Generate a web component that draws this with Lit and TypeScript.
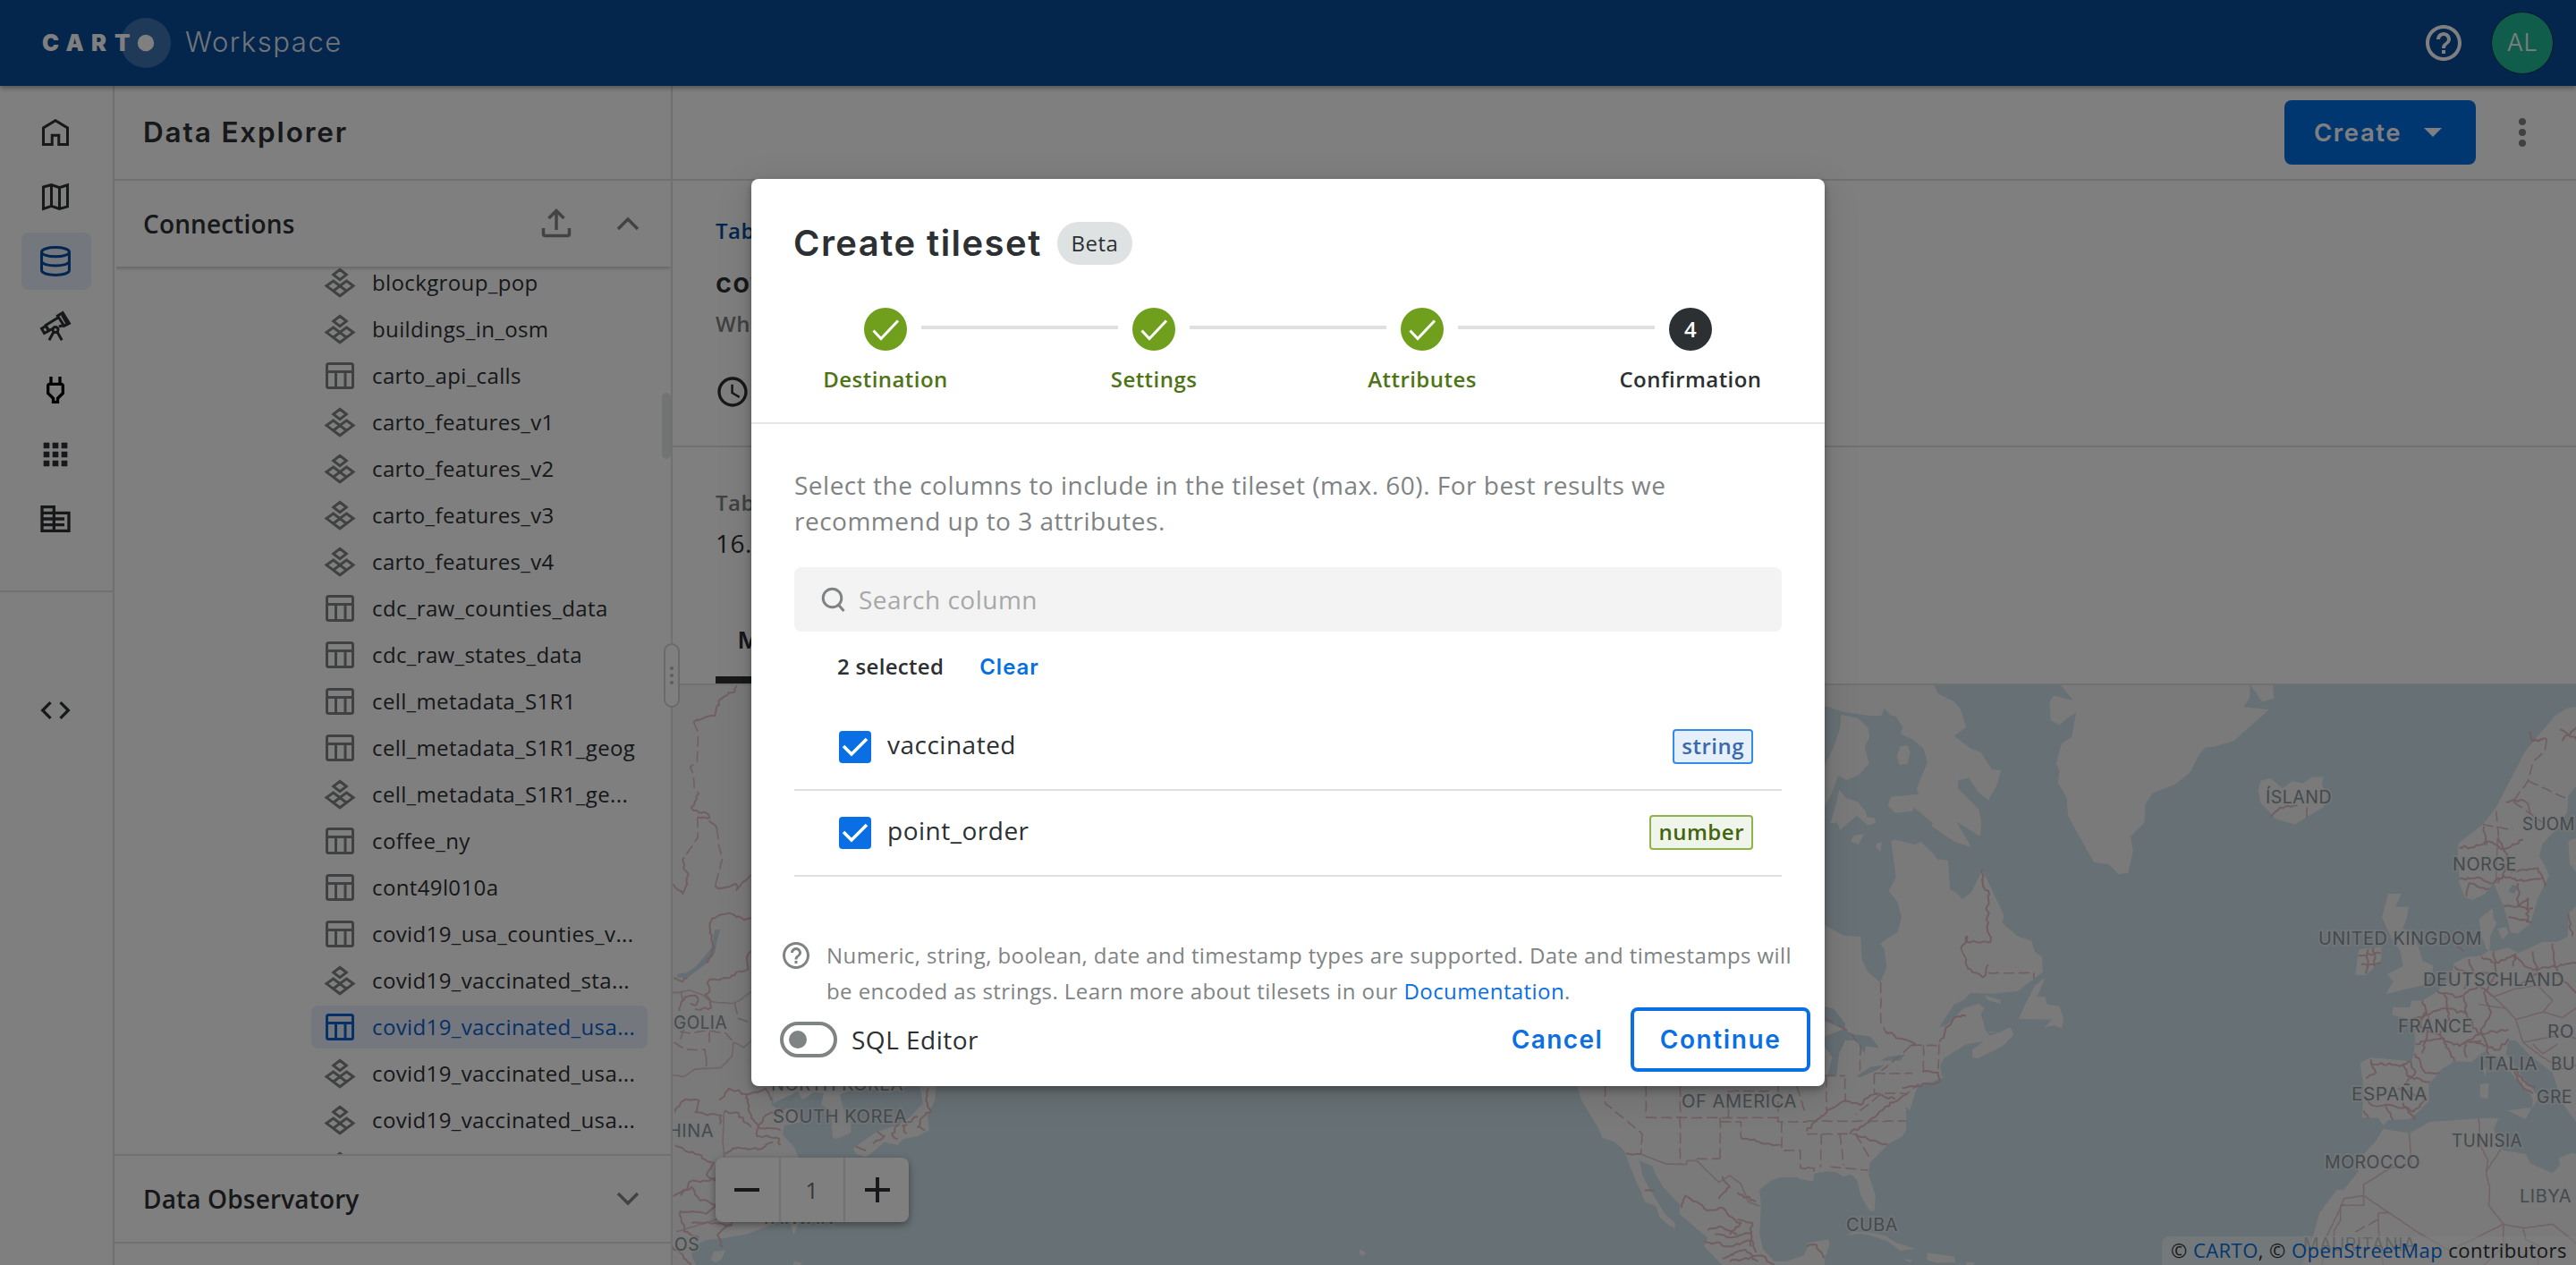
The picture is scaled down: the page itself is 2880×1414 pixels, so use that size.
import { LitElement, html, svg, css } from "lit";
import { customElement } from "lit/decorators.js";

type Pt = [number, number];

const pts = (s: string): Pt[] => s.trim().split(/\s+/).map((p) => p.split(",").map(Number) as Pt);

/* Deterministic roughening, so administrative borders look surveyed rather than ruled. */
const jag = (s: string, sx: number, sy: number, amp = 1.6): string => {
  const p = pts(s);
  let seed = Math.round(Math.abs(p[0][0] * 13 + p[0][1] * 7)) + 11;
  const rnd = () => {
    seed = (seed * 16807) % 2147483647;
    return seed / 2147483647 - 0.5;
  };
  let d = `M${p[0][0]} ${p[0][1]}`;
  for (let i = 1; i < p.length; i++) {
    const [x0, y0] = p[i - 1];
    const [x1, y1] = p[i];
    const n = Math.max(1, Math.round(Math.hypot((x1 - x0) / sx, (y1 - y0) / sy) / 3.5));
    for (let k = 1; k <= n; k++) {
      const t = k / n;
      const j = k === n ? 0 : amp;
      d += `L${(x0 + (x1 - x0) * t + rnd() * 2 * j * sx).toFixed(1)} ${(y0 + (y1 - y0) * t + rnd() * 2 * j * sy).toFixed(1)}`;
    }
  }
  return d;
};

interface Sheet {
  x: number; y: number; sx: number; sy: number;
  land: string[]; water: string[]; rough: string[]; dashed: string[]; plain: string[];
}

/* The basemap is stored as sheets, each with its own local grid. */
const SHEETS: Sheet[] = [
  {
    x: -12, y: -16, sx: 3, sy: 3,
    land: ["36,44 310,44 310,1440 36,1440"],
    water: [
      "178,868 195,868 185,905 178,945 150,980 85,1030 50,1028 55,1015 85,1012 115,990 145,955 165,930",
      "375,1440 400,1415 440,1392 470,1400 440,1440", "480,1440 500,1420 545,1415 540,1440", "590,1415 870,1390 870,1440 595,1440",
    ],
    rough: [
      "252,50 245,70 210,85 190,100 180,140 178,150 145,155 107,170",
      "98,455 105,468 155,480 160,492 120,490", "90,680 85,715 70,747 38,715", "125,410 98,455", "75,625 72,660 90,680",
      "160,500 185,530", "180,715 190,730 250,715 250,735 298,685",
      "165,840 190,820 235,815 270,830 300,830", "165,840 165,900 175,930 150,980",
      "40,1030 70,1042 85,1030", "155,1040 215,1030 290,1000 285,960 300,940", "155,1040 160,1075 145,1085 165,1110",
      "60,1140 65,1110 90,1090 120,1095 115,1120 95,1115", "110,1135 165,1130 160,1110",
      "300,1350 260,1400 210,1440", "290,1375 320,1440", "40,1430 60,1440",
    ],
    dashed: [
      "107,170 122,210 118,305 95,322 105,345 110,400 125,410", "120,490 120,560 75,625", "185,530 190,580 203,630 180,715",
      "245,1115 255,1165 300,1180", "60,1210 100,1215 150,1205 215,1215 240,1245", "40,1245 80,1270 145,1270 150,1335", "160,1210 158,1260", "75,1200 60,1240", "65,1075 70,1110",
    ],
    plain: [
      "36,1078 60,1078 90,1070 135,1085 165,1110 240,1115 260,1105 300,1075", "240,1245 275,1262 300,1240",
      "240,1245 235,1300 200,1325 150,1335 120,1340 75,1360 36,1350",
    ],
  },
  {
    x: -12, y: 414, sx: 1.206, sy: 3,
    land: [
      "14,0 121,0 121,102 150,102 148,165 155,178 178,178 187,222 165,235 163,265 178,305 185,345 172,460 155,560 135,580 115,598 85,612 60,618 42,640 40,670 46,702 14,702",
      "150,102 330,102 320,118 260,112 240,130 245,180 255,215 255,258 235,280 230,272 228,185 215,165 218,125 205,122 190,148 183,120 150,160",
      "348,102 370,102 368,150 358,200 360,250 345,270 325,280 318,300 300,290 285,322 275,340 262,330 258,312 275,280 290,255 320,230 335,205 352,160",
      "172,556 186,556 178,600", "70,657 86,652 80,685 72,694 66,685", "178,690 190,695 186,702 177,702",
      "941,648 950,662 944,672 941,665",
      "1234,102 1240,150 1252,200 1262,240 1268,275 1285,290 1298,320 1305,370 1315,430 1320,455 1325,490 1340,505 1345,540 1355,565 1366,578 1366,560 1352,530 1345,500 1330,440 1322,400 1318,352 1335,370 1340,400 1350,440 1365,480 1373,500 1372,530 1400,590 1410,610 1405,640 1425,690 1430,702 1568,702 1568,625 1545,635 1540,670 1515,690 1500,690 1485,650 1480,600 1482,500 1480,450 1495,420 1510,407 1530,407 1535,415 1550,420 1553,395 1568,390 1568,102",
    ],
    water: [],
    rough: [
      "18,190 30,150 50,150 45,190 80,200 78,230", "78,150 90,110 115,130 140,110 148,150", "115,130 118,190 130,240 128,270 155,275 160,300",
      "18,300 45,330 70,360 60,400 72,420", "84,190 100,190 120,240", "130,240 140,200 165,180", "130,240 160,250", "85,330 100,310 130,315 150,290",
      "25,470 40,420 60,420 72,410", "15,470 40,440 50,480 72,500", "25,520 60,530 72,500", "25,520 30,590 50,610", "40,560 70,560 95,570",
      "82,640 75,600 95,560", "14,640 40,700",
      "360,110 356,150 362,190 350,210 345,240 355,250", "345,205 325,235 330,262", "320,230 310,262 318,280", "290,255 300,270 285,295", "262,305 275,318",
      "1300,330 1320,330", "1455,275 1480,290 1508,300", "1568,230 1555,260", "1535,375 1550,385", "1325,452 1338,452",
      "1375,510 1380,470 1395,490 1410,520 1430,510 1440,540", "1420,600 1440,610 1470,590", "1405,620 1440,640 1470,620 1475,660", "1430,680 1460,650 1478,690", "1440,540 1455,560 1440,600", "1450,460 1475,490", "1550,650 1568,640", "1430,405 1440,440 1425,480",
      "1450,550 1470,560 1468,640", "1410,585 1430,575 1450,600", "1440,690 1480,670 1500,700",
    ],
    dashed: [
      "1272,102 1272,160 1322,262", "1327,102 1327,208", "1373,102 1373,208", "1427,208 1427,345", "1373,208 1373,362", "1327,208 1505,208", "1438,119 1495,119", "1438,119 1438,208", "1427,222 1455,222 1455,275",
      "1505,102 1505,222 1568,222", "1530,102 1540,180 1552,222", "1545,264 1568,264", "1510,222 1510,318 1535,318 1535,375", "1395,346 1427,346", "1322,262 1320,330", "60,0 60,50",
    ],
    plain: ["14,65 30,70 45,45 80,40 95,0", "1320,330 1355,364 1382,364 1382,352 1395,352 1415,400 1425,425 1440,402 1455,430 1465,490 1480,505", "84,190 82,290 84,340", "20,590 60,560 85,540"],
  },
  {
    x: 1268, y: -16, sx: 1.823, sy: 2.361,
    land: [
      "36,38 260,38 268,60 300,80 313,100 325,148 300,172 335,205 355,214 377,260 396,262 388,300 370,342 350,320 330,282 309,288 308,310 350,365 356,400 354,437 305,398 320,430 335,465 300,450 255,410 256,400 218,360 215,370 180,375 165,355 172,332 228,325 224,310 246,240 238,205 215,180 190,165 196,150 182,120 170,116 158,98 152,118 127,118 75,108 36,92",
      "70,115 105,125 125,150 128,175 118,200 127,245 105,275 80,288 64,275 52,320 36,360 36,250 55,200 68,150",
      "66,313 80,335 103,345 120,370 122,385 138,388 141,400 125,408 102,382 85,400 68,420 62,400 48,402 60,350",
      "190,200 205,196 211,215 205,245 188,248 184,225", "95,435 117,430 105,458 90,450", "143,455 153,450 150,477 141,465",
      "0,660 36,670 75,698 110,702 112,760 125,795 150,822 163,780 158,735 150,720 165,705 185,690 193,650 185,610 167,580 182,545 172,450 180,445 220,458 232,450 260,485 265,497 288,500 292,577 303,583 317,602 335,585 358,525 402,645 398,665 430,700 458,712 465,742 480,755 481,795 460,815 430,845 380,852 333,850 320,868 300,880 270,940 285,935 320,890 350,878 362,890 355,905 365,950 390,955 415,940 422,960 400,990 350,1022 338,1022 337,1000 360,978 325,985 280,1022 272,1040 275,1070 283,1070 255,1085 228,1092 222,1110 210,1160 202,1150 203,1190 202,1215 195,1228 165,1250 135,1290 128,1300 126,1330 140,1385 138,1425 128,1425 110,1385 103,1345 90,1328 75,1335 60,1322 15,1320 14,1345 0,1345",
      "0,1510 45,1500 46,1515 40,1540 20,1568 0,1568",
      "485,810 470,860 485,860 490,880 515,885 523,915 520,943 505,935 485,940 500,920 432,918 445,880 465,830", "363,856 395,868 395,878 368,868",
      "518,38 903,38 903,70 890,95 942,102 870,185 830,200 812,202 800,220 780,270 750,300 705,322 690,352 688,400 660,437 665,475 655,533 635,536 615,510 585,505 570,470 540,400 532,380 530,335 512,295 515,262 508,245 520,190 540,175 549,110 530,125 515,143 497,130 495,80 503,65 543,78",
      "905,38 950,38 952,72 928,82",
      "920,315 925,290 945,283 970,310 990,290 1010,297 1030,280 1053,280 1050,300 1060,330 1052,360 995,405 955,390 945,375 925,348",
      "1568,95 1550,98 1525,118 1465,210 1405,360 1378,405 1328,455 1327,480 1330,560 1340,595 1355,605 1380,590 1400,560 1420,620 1435,690 1450,693 1475,665 1490,600 1513,540 1505,515 1493,490 1500,455 1530,415 1550,370 1552,330 1568,305",
      "1568,440 1552,450 1555,510 1568,530",
      "1568,620 1553,640 1551,700 1530,715 1500,715 1450,745 1430,730 1400,740 1385,735 1375,700 1370,655 1398,625 1400,655 1406,665 1393,700 1392,735 1375,752 1345,755 1320,770 1312,810 1285,845 1255,870 1232,870 1230,888 1195,888 1193,908 1235,920 1240,960 1238,1010 1232,1030 1150,1020 1128,1035 1135,1100 1132,1178 1165,1180 1175,1200 1185,1185 1228,1183 1245,1165 1268,1135 1268,1090 1295,1050 1320,1030 1355,1032 1380,1005 1410,1020 1430,1050 1450,1085 1472,1110 1480,1130 1478,1155 1492,1125 1480,1105 1455,1065 1425,1010 1430,975 1445,975 1475,1015 1520,1060 1530,1100 1545,1150 1568,1190",
      "1408,680 1425,675 1430,690 1418,710", "1428,1160 1478,1152 1465,1183", "1372,1090 1390,1088 1388,1130 1372,1125", "1378,1045 1386,1050 1382,1072",
      "1185,588 1212,588 1200,622 1227,622 1222,655 1215,680 1240,700 1255,765 1277,778 1275,800 1255,830 1220,840 1180,853 1195,820 1183,800 1215,780 1210,740 1190,700 1172,650", "1125,735 1172,728 1170,765 1140,803 1118,802",
      "1175,1208 1228,1220 1270,1190 1380,1180 1410,1180 1400,1210 1418,1265 1465,1275 1475,1300 1520,1325 1535,1305 1533,1285 1558,1272 1568,1275 1568,1568 1010,1568 1030,1500 1045,1430 1080,1370 1095,1368 1125,1320 1118,1300 1160,1240",
      "80,1490 95,1480 130,1482 160,1490 180,1508 222,1525 190,1530 165,1505 130,1490 110,1485", "245,1535 300,1545 303,1560 265,1562 245,1555", "325,1560 343,1562 340,1568 325,1568", "195,1552 215,1555 212,1562",
    ],
    water: [
      "36,885 55,892 78,930 78,945 36,925", "36,965 75,945 92,958 130,965 148,995 120,990 118,1010 100,975 78,975 66,1010 60,1070 42,1070 52,1020 36,990",
      "100,1070 130,1045 158,1040 145,1052 110,1072", "150,1028 165,1018 200,1012 190,1028", "360,935 372,955 392,955 372,962",
      "1438,565 1450,568 1442,588 1430,582",
    ],
    rough: [
      "358,525 360,570 370,580 368,670 375,715 325,715 327,700 315,735", "325,760 328,785 360,808 370,775", "160,950 190,970 222,985", "325,910 300,915 270,980",
      "0,1215 20,1185 50,1155 75,1135 110,1145 130,1120 145,1118", "88,1222 120,1195 160,1150 205,1115", "100,1222 130,1240 165,1250", "150,1118 180,1130", "195,1100 270,1085 268,1060 235,1058",
      "945,385 965,360 1000,355", "1330,465 1360,465 1390,450 1420,470 1460,445", "1425,345 1455,340 1470,350",
      "1330,550 1365,545 1400,560 1420,540 1460,555 1500,545", "1345,595 1350,560 1390,575", "1420,620 1480,625", "1430,650 1478,665", "1450,560 1450,620 1470,600 1468,665", "1435,530 1490,520 1505,570", "1410,440 1430,500 1410,560", "1380,410 1385,460",
      "1125,750 1170,745", "1145,735 1140,800", "1155,730 1158,780", "1130,775 1170,770",
      "1375,755 1410,770 1440,750 1480,790 1568,770", "1400,740 1405,800 1380,850 1395,900 1370,960", "1285,845 1330,860 1370,830 1400,860", "1300,850 1310,920 1290,960 1320,1030", "1235,920 1300,890 1345,905 1370,960 1330,990 1290,970 1240,985", "1340,860 1345,905", "1255,870 1270,930 1255,1010", "1360,980 1410,1000 1430,970", "1375,955 1390,1010", "1370,960 1430,945", "1345,1020 1340,980 1375,975", "1260,900 1250,940 1290,960",
      "1440,780 1445,745", "1480,740 1490,800 1450,830", "1520,720 1530,800 1568,850", "1320,780 1350,800 1340,840", "1350,760 1360,800 1400,800",
      "1150,1025 1160,1060 1140,1075", "1150,1035 1215,1040 1230,1030", "1215,1035 1225,1070 1270,1085", "1232,1030 1240,1060 1220,1090", "1240,1010 1260,1060 1290,1060", "1135,1120 1150,1145 1200,1150 1240,1160", "1215,1140 1240,1185", "1180,1145 1195,1185", "1205,1100 1260,1130 1235,1165", "1135,1160 1145,1180",
      "1445,1050 1465,1085 1485,1100", "1435,1040 1460,1100 1480,1115", "1553,640 1560,700", "1475,160 1478,185 1508,180", "1535,155 1568,180", "1540,185 1568,150", "0,1520 20,1515 35,1550",
    ],
    dashed: [
      "151,822 151,930 160,950", "315,735 325,760", "370,797 463,797 463,812", "36,915 85,950 110,990 108,1060", "40,1070 40,1160", "78,1075 78,1135", "36,1068 78,1068",
      "138,1062 215,1062", "138,1062 138,1115 205,1115 228,1090", "150,1118 100,1170", "0,1188 203,1188", "0,1222 100,1222", "30,1222 28,1310", "68,1222 75,1305", "100,1222 130,1290", "48,1308 125,1318", "0,1310 15,1312 15,1325",
      "238,988 238,1060", "270,985 268,1050", "213,988 270,988", "213,988 195,1010 152,1055", "222,985 213,988",
      "1478,185 1508,180 1505,210 1480,240 1470,290 1440,345", "1470,290 1550,338", "1405,370 1410,440", "1440,345 1500,400", "1378,405 1440,420", "1470,350 1480,400", "1300,700 1340,740",
      "1118,1480 1165,1448", "1020,360 1018,395",
    ],
    plain: [
      "1228,1220 1232,1300 1190,1312 1135,1355 1135,1385 1250,1485 1310,1530 1420,1460 1460,1470 1520,1460 1568,1510", "1135,1385 1095,1392 1085,1425 1060,1490 1050,1568", "1135,1385 1135,1410 1088,1410 1088,1450 1075,1475 1072,1540", "1165,1430 1165,1470 1175,1568", "1165,1430 1188,1430",
      "1370,1180 1372,1250 1388,1290 1385,1330 1392,1360 1390,1410 1420,1460", "1415,1262 1385,1320", "1460,1470 1465,1500 1495,1520 1490,1568", "1380,1568 1420,1520 1420,1460",
      "1400,860 1440,840 1490,830 1520,870 1500,900 1445,920 1425,890 1400,860", "1500,900 1540,915 1568,890", "1445,920 1460,980 1540,960 1568,970", "1460,980 1500,1020 1540,1050 1568,1040", "1480,985 1500,1010 1530,985", "1425,890 1370,880",
      "1405,560 1408,440",
    ],
  },
];

type Label = [string, number, number, number];
const LABELS: Label[] = [
  ["ÍSLAND", 2533, 898, 74], ["SUOM", 2820, 928, 59], ["NORGE", 2742, 973, 72], ["UNITED KINGDOM", 2592, 1056, 183],
  ["DEUTSCHLAND", 2709, 1102, 158], ["FRANCE", 2681, 1154, 84], ["RO", 2848, 1160, 30], ["ITALIA", 2772, 1196, 65], ["BU", 2852, 1196, 27],
  ["ESPAÑA", 2629, 1230, 85], ["GRE", 2836, 1233, 40], ["TUNISIA", 2741, 1282, 79], ["MOROCCO", 2599, 1306, 107], ["LIBYA", 2817, 1344, 58],
  ["CUBA", 2064, 1376, 58], ["MAURITANIA", 2575, 1398, 126], ["GOLIA", 753, 1150, 60],
  ["NORTH KOREA", 862, 1219, 148], ["SOUTH KOREA", 864, 1255, 150], ["HINA", 747, 1271, 51], ["OS", 754, 1398, 28],
  ["OF AMERICA", 1880, 1238, 129], ["TAIWAN", 850, 1368, 83],
];

const polys = (list: string[], cls: string) => list.map((p) => svg`<polygon class=${cls} points=${p}></polygon>`);

@customElement("world-map")
class WorldMap extends LitElement {
  static styles = css`
    :host { display: block; width: 2128px; height: 648px; }
    svg { display: block; background: #cee0e9; }
    .land { fill: #f4f4f4; }
    .water { fill: #cadce6; }
    path { fill: none; stroke: #e0bcc2; stroke-width: 2; vector-effect: non-scaling-stroke; stroke-linejoin: round; }
    .dash { stroke-width: 1.6; stroke-dasharray: 12 5; }
    .plain { stroke: #e2c8cd; stroke-width: 1.6; }
    text { font: 400 19.5px Inter, "Open Sans", sans-serif; fill: #8a959b; stroke: #f0f2f3; stroke-opacity: .55; stroke-width: 4px; paint-order: stroke; }
  `;
  render() {
    return html`<svg width="2128" height="648" viewBox="0 0 2128 648">
      ${SHEETS.map((s) => svg`<g transform="translate(${s.x} ${s.y}) scale(${1 / s.sx} ${1 / s.sy})">
        ${polys(s.land, "land")}${polys(s.water, "water")}
        ${s.plain.map((l) => svg`<path class="plain" d=${jag(l, s.sx, s.sy, 0.3)}></path>`)}
        ${s.dashed.map((l) => svg`<path class="dash" d=${jag(l, s.sx, s.sy, 0.3)}></path>`)}
        ${s.rough.map((l) => svg`<path d=${jag(l, s.sx, s.sy)}></path>`)}
      </g>`)}
      ${LABELS.map(([t, x, y, w]) => svg`<text x=${x - 752} y=${y - 766} textLength=${w} lengthAdjust="spacingAndGlyphs">${t}</text>`)}
    </svg>`;
  }
}

const help = (size: number) => html`<svg width=${size} height=${size} viewBox="0 0 24 24" fill="currentColor"><path d="M11 18h2v-2h-2v2zm1-16C6.48 2 2 6.48 2 12s4.48 10 10 10 10-4.48 10-10S17.52 2 12 2zm0 18c-4.41 0-8-3.59-8-8s3.59-8 8-8 8 3.59 8 8-3.59 8-8 8zm0-14c-2.21 0-4 1.79-4 4h2c0-1.1.9-2 2-2s2 .9 2 2c0 2-3 1.75-3 5h2c0-2.25 3-2.5 3-5 0-2.21-1.79-4-4-4z"/></svg>`;

const VB = "-1.33 -1.33 26.67 26.67";
const NAV = [
  html`<svg class="ico line" viewBox=${VB}><path d="M3 21V8.6L12 3.2l9 5.4V21h-6.5v-6.8h-5V21z"/></svg>`,
  html`<svg class="ico line" viewBox=${VB}><path d="M3 4.7 9 3.1l6 2 6-1.900v16.100l-6 1.600-6-2-6 2zM9 3.100v15.800M15 5.100v15.800"/></svg>`,
  html`<svg class="ico line" viewBox=${VB}><path d="M1.7 5.1c0-2 4.6-3.4 10.3-3.4s10.3 1.4 10.3 3.4S17.700 8.500 12 8.500 1.700 7.100 1.700 5.100zM1.700 5.100v13.800c0 2 4.600 3.400 10.300 3.400s10.300-1.400 10.300-3.400V5.100M1.700 12c0 2 4.600 3.400 10.300 3.400s10.300-1.400 10.300-3.400"/></svg>`,
  html`<svg class="ico line" viewBox=${VB}><path d="M13.600 4.700 17.400 2.400 22.300 10.300 18.500 12.200zM14 6 4.800 11.700 7 15.600M7 15.600l3-1.200M14.600 12.700l3.400-1M1.700 14.200l3.200-1.900 2 3.600-3.200 1.800zM17 4l3.800 6.800M10.700 16.700 7.300 22.800M13.300 16.700l3.500 6.100"/><circle cx="12" cy="15" r="2"/></svg>`,
  html`<svg class="ico black" viewBox="0 0 24 24"><path d="M16 9v4.660l-3.500 3.510V19h-1v-1.830L8 13.650V9h8m0-6h-2v4h-4V3H8v4h-.01C6.900 6.990 6 7.890 6 8.980v5.520L9.500 18v3h5v-3l3.500-3.510V9c0-1.100-.9-2-2-2V3z"/></svg>`,
  html`<svg class="ico" viewBox="0 0 24 24"><path d="M4 8h4V4H4v4zm6 12h4v-4h-4v4zm-6 0h4v-4H4v4zm0-6h4v-4H4v4zm6 0h4v-4h-4v4zm6-10v4h4V4h-4zm-6 4h4V4h-4v4zm6 6h4v-4h-4v4zm0 6h4v-4h-4v4z"/></svg>`,
  html`<svg class="ico" viewBox="0 0 24 24"><path d="M12 7V3H2v18h20V7H12zM10 19H4v-2h6v2zm0-4H4v-2h6v2zm0-4H4V9h6v2zm0-4H4V5h6v2zm10 12h-8v-2h2v-2h-2v-2h2v-2h-2V9h8v10zm-2-8h-4v2h4v-2zm0 4h-4v2h4v-2z"/></svg>`,
];

const tableIcon = html`<svg class="fico" viewBox="0 0 40 40"><rect x="5.500" y="6.500" width="29" height="27" rx="2"/><path d="M5.500 15.500h29M15.500 15.500v18M26 15.500v18"/></svg>`;
const tilesIcon = html`<svg class="fico" viewBox="0 0 40 40"><path d="M20 5.300 27.300 11 20 16.700 12.700 11zM12.600 18 20 23.600 12.600 29.200 5 23.600zM27.400 18 35 23.600 27.400 29.200 20 23.600zM20 23.600 27.400 29.200 20 34.800 12.600 29.200z"/></svg>`;

const FILES: [string, "table" | "tiles"][] = [
  ["blockgroup_pop", "tiles"], ["buildings_in_osm", "tiles"], ["carto_api_calls", "table"], ["carto_features_v1", "tiles"],
  ["carto_features_v2", "tiles"], ["carto_features_v3", "tiles"], ["carto_features_v4", "tiles"], ["cdc_raw_counties_data", "table"],
  ["cdc_raw_states_data", "table"], ["cell_metadata_S1R1", "table"], ["cell_metadata_S1R1_geog", "table"], ["cell_metadata_S1R1_ge...", "tiles"],
  ["coffee_ny", "table"], ["cont49l010a", "table"], ["covid19_usa_counties_v...", "table"], ["covid19_vaccinated_sta...", "tiles"],
  ["covid19_vaccinated_usa...", "table"], ["covid19_vaccinated_usa...", "tiles"], ["covid19_vaccinated_usa...", "tiles"], ["", "tiles"],
];
const SELECTED = 16;

const STEPS = ["Destination", "Settings", "Attributes", "Confirmation"];
const COLUMNS = [["vaccinated", "string"], ["point_order", "number"]];

@customElement("tileset-dialog")
class TilesetDialog extends LitElement {
  static styles = css`
    :host { display: block; width: 1200px; height: 1014px; background: #fff; border-radius: 8px; box-shadow: 0 4px 8px rgba(0,0,0,.3), 0 8px 40px rgba(0,0,0,.14); color: #2c3032; font: 400 28px/40px "Open Sans", sans-serif; letter-spacing: .5px; overflow: hidden; }
    * { box-sizing: border-box; }
    .top { height: 274px; padding-top: 48px; border-bottom: 2px solid #e5e5e5; }
    .title { display: flex; align-items: center; gap: 16px; padding-left: 47px; height: 48px; }
    h2 { margin: 0; width: 279px; white-space: nowrap; font: 600 40px/48px Inter, sans-serif; letter-spacing: 1.450px; }
    .beta { height: 48px; width: 84px; border-radius: 24px; background: #dfe2e3; font-size: 24px; line-height: 48px; text-align: center; }
    .steps { display: flex; margin-top: 48px; }
    .step { width: 300px; text-align: center; color: #4f7416; font-weight: 600; font-size: 24px; line-height: 36px; letter-spacing: .45px; }
    .mark { display: flex; gap: 16px; height: 48px; }
    .bar { flex: 1; height: 4px; margin-top: 20px; background: #e0e0e0; }
    .bar.off { background: none; }
    .dot { width: 48px; height: 48px; border-radius: 50%; background: #709f1d; color: #fff; display: flex; align-items: center; justify-content: center; }
    .dot svg { display: block; }
    .lab { margin-top: 14px; }
    .now { color: #2c3032; }
    .now .dot { background: #2c3032; }
    .body { padding: 48px 48px 0; }
    .intro { color: #808384; letter-spacing: .5px; white-space: nowrap; }
    .search { margin-top: 32px; height: 72px; border-radius: 8px; background: #f3f3f3; display: flex; align-items: center; padding-left: 26px; gap: 10px; color: #a6a8a9; letter-spacing: .5px; }
    .search svg { display: block; }
    .picked { height: 82px; padding: 0 0 4px 48px; display: flex; align-items: center; gap: 40px; font-size: 24px; font-weight: 600; letter-spacing: .3px; }
    .clear { font: 600 24px/40px Inter, sans-serif; color: #036fe2; padding-top: 2px; letter-spacing: 1px; }
    .col { height: 96px; border-bottom: 2px solid #e0e0e0; display: flex; align-items: center; padding: 0 32px 0 50px; }
    .box { width: 36px; height: 36px; border-radius: 4px; background: #0a6fe5; }
    .box svg { display: block; }
    .name { flex: 1; padding: 0 0 6px 18px; }
    .tag { height: 39px; line-height: 34px; margin-bottom: 1px; padding: 0 8px; border: 2px solid; border-radius: 4px; font-size: 24px; font-weight: 600; letter-spacing: .5px; }
    .string { border-color: #338be7; background: #e6f0fb; color: #3b69ab; }
    .number { border-color: #8fb24a; background: #eff5ea; color: #42640f; }
    .note { margin-top: 68px; padding-left: 32px; display: flex; gap: 16px; color: #808384; font-size: 24px; letter-spacing: .42px; white-space: nowrap; }
    .note svg { display: block; margin-top: 2px; }
    .note a { color: #0a6fe5; }
    .foot { margin-top: -2px; height: 72px; padding: 0 16px 0 32px; display: flex; align-items: center; }
    .switch { width: 64px; height: 40px; border: 4px solid #808384; border-radius: 20px; padding: 6px; }
    .knob { width: 20px; height: 20px; border-radius: 50%; background: #808384; }
    .sql { flex: 1; padding-left: 16px; }
    .btn { font: 600 28px/64px Inter, sans-serif; color: #0a6fe5; letter-spacing: 1.400px; text-align: center; }
    .cancel { width: 130px; margin-right: 17px; }
    .go { width: 201px; height: 72px; border: 4px solid #0a6fe5; border-radius: 8px; letter-spacing: 1.600px; }
  `;
  render() {
    return html`
      <div class="top">
        <div class="title"><h2>Create tileset</h2><span class="beta">Beta</span></div>
        <div class="steps">${STEPS.map((s, i) => html`
          <div class="step ${i === 3 ? "now" : ""}">
            <div class="mark">
              <span class="bar ${i === 0 ? "off" : ""}"></span>
              <span class="dot">${i === 3 ? "4" : html`<svg width="32" height="32" viewBox="0 0 32 32" fill="none" stroke="#fff" stroke-width="3"><path d="M2.500 17.500 11 26.500 30 6.500"/></svg>`}</span>
              <span class="bar ${i === 3 ? "off" : ""}"></span>
            </div>
            <div class="lab">${s}</div>
          </div>`)}</div>
      </div>
      <div class="body">
        <div class="intro">Select the columns to include in the tileset (max. 60). For best results we<br>recommend up to 3 attributes.</div>
        <div class="search"><svg width="36" height="36" viewBox="0 0 36 36" fill="none" stroke="#808384" stroke-width="3"><circle cx="16.500" cy="16.500" r="10.300"/><path d="m22.500 23 7 8"/></svg><span>Search column</span></div>
        <div class="picked"><span>2 selected</span><span class="clear">Clear</span></div>
        ${COLUMNS.map(([n, t]) => html`<div class="col"><span class="box"><svg width="36" height="36" viewBox="0 0 36 36" fill="none" stroke="#fff" stroke-width="3.600"><path d="M5 17 14 26 31 9"/></svg></span><span class="name">${n}</span><span class="tag ${t}">${t}</span></div>`)}
      </div>
      <div class="note">${help(36)}<span>Numeric, string, boolean, date and timestamp types are supported. Date and timestamps will<br>be encoded as strings. Learn more about tilesets in our <a>Documentation</a>.</span></div>
      <div class="foot"><div class="switch"><div class="knob"></div></div><span class="sql">SQL Editor</span><span class="btn cancel">Cancel</span><span class="btn go">Continue</span></div>
    `;
  }
}

@customElement("app-root")
class AppRoot extends LitElement {
  static styles = css`
    :host { display: block; position: relative; width: 2880px; height: 1414px; overflow: hidden; background: #fff; color: #2c3032; font: 400 24px/36px "Open Sans", sans-serif; letter-spacing: .5px; }
    * { box-sizing: border-box; }
    svg { display: block; }
    .head { position: relative; height: 96px; background: #084c9a; display: flex; align-items: center; color: #fff; padding-right: 25px; box-shadow: 0 2px 6px rgba(0,0,0,.4); }
    .logo text { font: 900 25.500px Inter, sans-serif; fill: #fff; }
    .ws { width: 500px; flex: 1; padding: 0 0 3px 15px; font: 300 31px/40px Inter, sans-serif; letter-spacing: 1.550px; color: rgba(255,255,255,.9); }
    .avatar { width: 70px; height: 70px; margin-left: 29px; border-radius: 50%; border: 1px solid #1a2f52; background: #23bb99; text-align: center; font: 300 27px/68px Inter, sans-serif; }
    .shell { display: flex; height: 1318px; }
    .rail { width: 128px; border-right: 2px solid #e0e0e0; padding-top: 20px; }
    .cell { height: 64px; width: 78px; margin: 0 0 8px 24px; border-radius: 8px; display: flex; align-items: center; padding-left: 18px; }
    .ico { width: 40px; height: 40px; fill: #2c3032; }
    .line { fill: none; stroke: #2c3032; stroke-width: 2; }
    .ico.black { fill: #000; }
    .cell.on { background: #e8effa; }
    .on .line { stroke: #024d9e; }
    .rail hr { margin: 48px 0 100px; border: 0; height: 2px; background: #e0e0e0; }
    .panel { width: 624px; border-right: 2px solid #e0e0e0; display: flex; flex-direction: column; }
    .ptitle { height: 106px; padding: 0 0 2px 32px; border-bottom: 2px solid #e0e0e0; font: 600 31.500px/104px Inter, sans-serif; letter-spacing: 1.850px; }
    .sec { height: 96px; flex: none; display: flex; align-items: center; padding: 0 30px 0 32px; font-weight: 600; font-size: 28px; letter-spacing: .15px; }
    .sec .grow { flex: 1; }
    .conn { box-shadow: 0 2px 4px rgba(0,0,0,.22); clip-path: inset(0 0 -8px 2px); }
    .sec svg { fill: none; stroke: #848687; stroke-width: 3.500; }
    .up { margin-right: 42px; }
    .listwrap { position: relative; height: 992px; overflow: hidden; padding-left: 220px; }
    .row { height: 48px; width: 376px; margin-bottom: 4px; border-radius: 8px; padding-left: 12px; display: flex; align-items: center; gap: 16px; white-space: nowrap; letter-spacing: .38px; }
    .row:first-child { margin-top: -6px; }
    .fico { width: 40px; height: 40px; fill: none; stroke: #808384; stroke-width: 3; }
    .row.sel { background: #e8effa; color: #0a62cc; }
    .sel .fico { stroke: #0a62cc; }
    .thumb { position: absolute; right: 0; top: 141px; width: 10px; height: 74px; border-radius: 5px; background: #e4e6e6; }
    .obs { border-top: 2px solid #e0e0e0; border-bottom: 2px solid #e0e0e0; height: 100px; }
    .handle { position: absolute; left: 742px; top: 719px; width: 18px; height: 72px; border: 2px solid #d4d4d4; border-radius: 9px; background: #fff; display: flex; flex-direction: column; align-items: center; justify-content: center; gap: 4px; }
    .handle i { width: 4px; height: 4px; border-radius: 50%; background: #bbb; }
    .main { flex: 1; min-width: 0; }
    .bar { height: 106px; border-bottom: 2px solid #e0e0e0; display: flex; align-items: center; justify-content: flex-end; padding: 0 56px 0 0; }
    .create { width: 214px; height: 72px; border-radius: 8px; background: #036fe2; color: #fff; display: flex; align-items: center; padding-left: 33px; font: 600 27.500px/72px Inter, sans-serif; letter-spacing: 1.600px; }
    .tri { margin-left: 25px; border: 10px solid transparent; border-top-color: #fff; border-bottom: 0; }
    .dots { margin-left: 48px; display: flex; flex-direction: column; gap: 4px; }
    .dots i { width: 8px; height: 8px; border-radius: 50%; background: #808384; }
    .meta { height: 298px; padding: 38px 0 0 48px; border-bottom: 2px solid #e0e0e0; }
    .crumb { color: #024d9e; font-weight: 600; }
    .tname { margin-top: 20px; font: 600 31px/40px Inter, sans-serif; letter-spacing: 1.200px; }
    .desc { margin-top: 8px; color: #808384; font-weight: 600; }
    .clock { margin: 38px 0 0 -1px; fill: #2c3032; }
    .stats { height: 266px; padding: 44px 0 0 48px; border-bottom: 2px solid #e0e0e0; }
    .slab { color: #808384; font-weight: 600; }
    .sval { font-size: 28px; line-height: 40px; margin-top: 7px; }
    .tab { margin-top: 66px; width: 140px; height: 71px; border-bottom: 8px solid #2c3032; padding: 0 0 0 25px; font: 600 26px/46px Inter, sans-serif; }
    .zoom { position: absolute; left: 800px; top: 1294px; width: 216px; height: 72px; border-radius: 8px; background: #fff; display: flex; box-shadow: 0 3px 8px rgba(0,0,0,.4); color: #6c7174; }
    .zoom div { flex: 1; display: flex; align-items: center; justify-content: center; border-right: 2px solid #e4e4e4; font-size: 25px; }
    .zoom div:last-child { border: 0; }
    .zoom svg { stroke: #2c3032; stroke-width: 4; }
    .attr { position: absolute; right: 0; top: 1382px; width: 463px; height: 32px; padding-left: 10px; background: rgba(255,255,255,.5); border-top-left-radius: 8px; font-size: 22px; line-height: 31px; letter-spacing: .450px; white-space: nowrap; color: #2c3032; }
    .attr a { color: #036fe2; }
    .scrim { position: absolute; inset: 0; background: rgba(0,0,0,.5); display: flex; align-items: center; justify-content: center; }
  `;
  render() {
    return html`
      <div class="head">
        <svg class="logo" width="192" height="96" viewBox="0 0 192 96"><circle cx="163" cy="48" r="28" fill="#fff" fill-opacity=".22"/><text x="47 73.500 102 128" y="57">CART</text><circle cx="163" cy="48" r="9.200" fill="#fff"/></svg>
        <span class="ws">Workspace</span>
        ${help(48)}
        <span class="avatar">AL</span>
      </div>
      <div class="shell">
        <div class="rail">
          ${NAV.map((n, i) => html`<div class="cell ${i === 2 ? "on" : ""}">${n}</div>`)}
          <hr>
          <div class="cell"><svg class="ico" viewBox="0 0 24 24"><path d="M9.400 16.600L4.800 12l4.600-4.600L8 6l-6 6 6 6 1.400-1.400zm5.200 0l4.600-4.600-4.600-4.600L16 6l6 6-6 6-1.400-1.400z"/></svg></div>
        </div>
        <div class="panel">
          <div class="ptitle">Data Explorer</div>
          <div class="sec conn"><span class="grow">Connections</span>
            <svg class="up" width="40" height="40" viewBox="0 0 40 40"><path d="M5.500 25v6.500a2 2 0 0 0 2 2h25a2 2 0 0 0 2-2V25M20 27V7M11.500 14 20 5.500 28.500 14"/></svg>
            <svg width="36" height="36" viewBox="0 0 36 36"><path d="M7 24 18 13 29 24"/></svg></div>
          <div class="listwrap">
            ${FILES.map(([n, k], i) => html`<div class="row ${i === SELECTED ? "sel" : ""}">${k === "table" ? tableIcon : tilesIcon}<span>${n}</span></div>`)}
            <div class="thumb"></div>
          </div>
          <div class="sec obs"><span class="grow">Data Observatory</span><svg width="36" height="36" viewBox="0 0 36 36"><path d="M7 12 18 23 29 12"/></svg></div>
        </div>
        <div class="main">
          <div class="bar"><span class="create">Create<i class="tri"></i></span><span class="dots"><i></i><i></i><i></i></span></div>
          <div class="meta">
            <div class="crumb">Tab</div><div class="tname">cov</div><div class="desc">Wh</div>
            <svg class="clock" width="40" height="40" viewBox="0 0 24 24"><path d="M11.990 2C6.470 2 2 6.480 2 12s4.470 10 9.990 10C17.520 22 22 17.520 22 12S17.520 2 11.990 2zM12 20c-4.420 0-8-3.580-8-8s3.580-8 8-8 8 3.580 8 8-3.580 8-8 8zm.5-13H11v6l5.250 3.150.75-1.230-4.500-2.670z"/></svg>
          </div>
          <div class="stats"><div class="slab">Tab</div><div class="sval">16.</div><div class="tab">M</div></div>
          <world-map></world-map>
        </div>
      </div>
      <div class="handle"><i></i><i></i><i></i></div>
      <div class="zoom"><div><svg width="28" height="28"><path d="M0 14h28"/></svg></div><div>1</div><div><svg width="28" height="28"><path d="M0 14h28M14 0v28"/></svg></div></div>
      <div class="attr">© <a>CARTO</a>, © <a>OpenStreetMap</a> contributors</div>
      <div class="scrim"><tileset-dialog></tileset-dialog></div>
    `;
  }
}
